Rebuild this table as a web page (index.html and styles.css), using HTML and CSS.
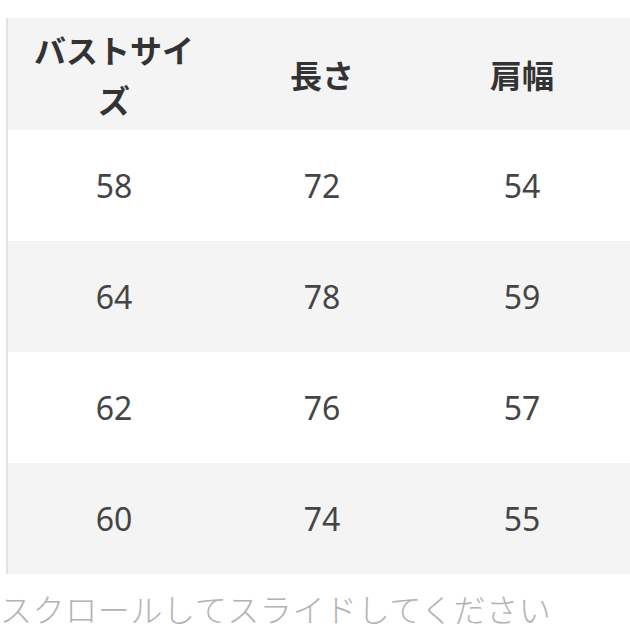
FILE: index.html
```html
<!DOCTYPE html>
<html lang="ja">
<head>
<meta charset="utf-8">
<link rel="stylesheet" href="styles.css">
</head>
<body>
<div class="scroll">
  <table class="size-table">
    <colgroup>
      <col class="c1"><col class="c2"><col class="c3">
    </colgroup>
    <thead>
      <tr><th>バストサイズ</th><th>長さ</th><th class="last">肩幅</th></tr>
    </thead>
    <tbody>
      <tr><td>58</td><td>72</td><td class="last">54</td></tr>
      <tr class="alt"><td>64</td><td>78</td><td class="last">59</td></tr>
      <tr><td>62</td><td>76</td><td class="last">57</td></tr>
      <tr class="alt"><td>60</td><td>74</td><td class="last">55</td></tr>
    </tbody>
  </table>
</div>
<p class="hint">スクロールしてスライドしてください</p>
</body>
</html>
```

FILE: styles.css
```css
html, body {
  margin: 0;
  padding: 0;
  background: #ffffff;
}

body {
  width: 630px;
  height: 630px;
  overflow: hidden;
  font-family: "Noto Sans", "Noto Sans CJK JP", sans-serif;
}

.scroll {
  margin-top: 18px;
  margin-left: 6px;
  border-left: 2px solid #e3e3e3;
}

.size-table {
  width: 622px;
  border-collapse: collapse;
  table-layout: fixed;
}

.c1 { width: 212px; }
.c2 { width: 204px; }
.c3 { width: 206px; }

.size-table th {
  background: #f4f4f5;
  color: #333333;
  font-family: "Noto Sans CJK JP", sans-serif;
  font-weight: 700;
  font-size: 32px;
  line-height: 50px;
  height: 112px;
  padding: 0 20px;
  box-sizing: border-box;
  text-align: center;
  vertical-align: middle;
}

.size-table td {
  color: #454545;
  font-size: 32px;
  line-height: 50px;
  height: 111px;
  padding: 0 20px;
  box-sizing: border-box;
  text-align: center;
  vertical-align: middle;
}

.size-table th.last,
.size-table td.last {
  padding-right: 30px;
  padding-left: 20px;
}

.size-table tr.alt td {
  background: #f4f4f5;
}

.hint {
  margin: 12px 0 0 0;
  font-family: "Noto Sans CJK JP", sans-serif;
  font-weight: 300;
  font-size: 32px;
  letter-spacing: 0.6px;
  line-height: 44px;
  color: #b3b3b3;
  white-space: nowrap;
}
```
